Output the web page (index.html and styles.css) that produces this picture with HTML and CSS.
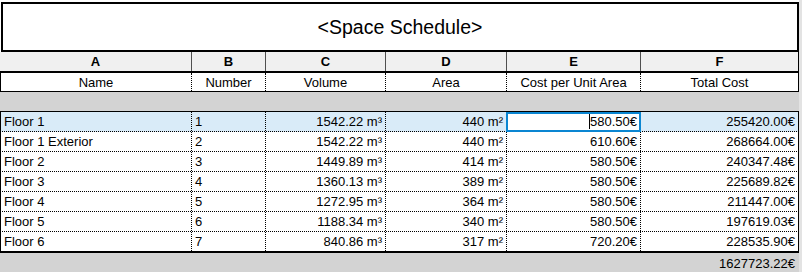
FILE: index.html
```html
<!DOCTYPE html>
<html>
<head>
<meta charset="utf-8">
<link rel="stylesheet" href="styles.css">
</head>
<body>
<div class="page">
  <div class="sheet">
    <div class="title">&lt;Space Schedule&gt;</div>
    <div class="row letters">
      <div class="c ca">A</div><div class="c">B</div><div class="c">C</div><div class="c">D</div><div class="c">E</div><div class="c cf">F</div>
    </div>
    <div class="row names">
      <div class="c ca">Name</div><div class="c">Number</div><div class="c">Volume</div><div class="c">Area</div><div class="c">Cost per Unit Area</div><div class="c cf">Total Cost</div>
    </div>
    <div class="spacer"></div>
    <div class="row data active">
      <div class="c ca">Floor 1</div><div class="c">1</div><div class="c r">1542.22 m³</div><div class="c r">440 m²</div><div class="c r sel"><span class="caret">580.50€</span></div><div class="c r cf">255420.00€</div>
    </div>
    <div class="row data">
      <div class="c ca">Floor 1 Exterior</div><div class="c">2</div><div class="c r">1542.22 m³</div><div class="c r">440 m²</div><div class="c r">610.60€</div><div class="c r cf">268664.00€</div>
    </div>
    <div class="row data">
      <div class="c ca">Floor 2</div><div class="c">3</div><div class="c r">1449.89 m³</div><div class="c r">414 m²</div><div class="c r">580.50€</div><div class="c r cf">240347.48€</div>
    </div>
    <div class="row data">
      <div class="c ca">Floor 3</div><div class="c">4</div><div class="c r">1360.13 m³</div><div class="c r">389 m²</div><div class="c r">580.50€</div><div class="c r cf">225689.82€</div>
    </div>
    <div class="row data">
      <div class="c ca">Floor 4</div><div class="c">5</div><div class="c r">1272.95 m³</div><div class="c r">364 m²</div><div class="c r">580.50€</div><div class="c r cf">211447.00€</div>
    </div>
    <div class="row data">
      <div class="c ca">Floor 5</div><div class="c">6</div><div class="c r">1188.34 m³</div><div class="c r">340 m²</div><div class="c r">580.50€</div><div class="c r cf">197619.03€</div>
    </div>
    <div class="row data last">
      <div class="c ca">Floor 6</div><div class="c">7</div><div class="c r">840.86 m³</div><div class="c r">317 m²</div><div class="c r">720.20€</div><div class="c r cf">228535.90€</div>
    </div>
    <div class="total">1627723.22€</div>
  </div>
  <div class="strip"></div>
</div>
</body>
</html>
```

FILE: styles.css
```css
* { box-sizing: border-box; }
html, body { margin: 0; padding: 0; background: #fff; }
body {
  font-family: "Liberation Sans", Arial, sans-serif;
  font-size: 13px;
  color: #000;
  width: 802px;
  height: 272px;
  overflow: hidden;
}
.page { display: flex; height: 272px; }
.sheet { width: 799px; display: flex; flex-direction: column; }
.strip { width: 3px; background: #e3e3e3; }

.title {
  margin: 2px 0 0 1px;
  width: 798px;
  height: 50px;
  border: 2px solid #000;
  display: flex;
  align-items: center;
  justify-content: center;
  font-size: 19.5px;
  padding-top: 1px;
}

.row {
  display: grid;
  grid-template-columns: 192px 74px 120px 121px 134px 158px;
}
.c {
  border-right: 1px dotted #000;
  padding: 0 3px;
  white-space: nowrap;
  display: flex;
  align-items: center;
  overflow: hidden;
}
.r { justify-content: flex-end; }

.letters { height: 21px; border-bottom: 2px solid #000; background: #f0f0f0; }
.letters .c { border-right: 1px solid #505050; justify-content: center; font-weight: bold; }
.letters .cf { border-right: 1px solid #000; }

.names { height: 19px; border-bottom: 1px solid #000; }
.names .c { justify-content: center; }
.names .ca { border-left: 1px solid #000; }
.names .cf { border-right: 1px solid #000; }

.spacer { height: 20px; background: #d3d3d3; border-bottom: 1px solid #000; }

.data { height: 20px; border-bottom: 1px dotted #000; }
.data .ca { border-left: 1px solid #000; }
.data .cf { border-right: 1px solid #000; }
.data.last { height: 21px; border-bottom: 2px solid #000; }
.active { background: #d9ebf8; }

.sel { position: relative; background: #fff; overflow: visible; }
.sel::after {
  content: "";
  position: absolute;
  left: -1px; top: 0; right: -1px; bottom: -1px;
  border: 2px solid #0a86d2;
  z-index: 1;
}
.caret { border-left: 1px solid #000; line-height: 15px; }

.total {
  flex: 1;
  background: #d3d3d3;
  text-align: right;
  padding: 3px 4px 0 0;
}
```
